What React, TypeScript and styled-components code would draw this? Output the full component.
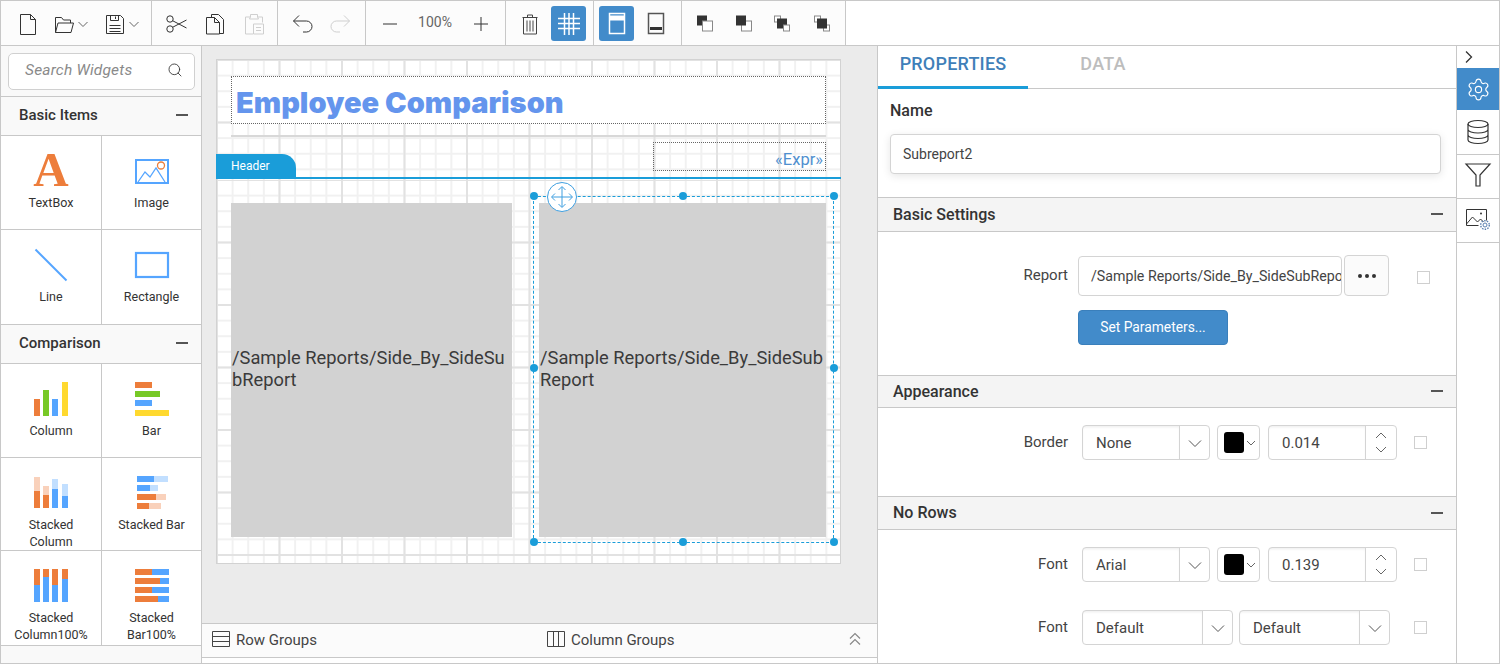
import React from "react";
import styled, { createGlobalStyle } from "styled-components";
import { Settings, Search } from "lucide-react";

const Global = createGlobalStyle`
  html, body { margin: 0; padding: 0; background: #fff; }
  * { box-sizing: border-box; }
  body { font-family: Roboto, "Liberation Sans", sans-serif; color: #333; }
`;

const LINE = "#c8c8c8";

const Root = styled.div`
  width: 1500px; height: 664px; border: 1px solid ${LINE}; overflow: hidden;
  display: flex; flex-direction: column; background: #fff;
`;
const Toolbar = styled.div`
  height: 45px; flex: none; display: flex; border-bottom: 1px solid ${LINE}; background: #fff;
`;
const ToolGroup = styled.div<{ $w: number; $pad: number }>`
  width: ${(p) => p.$w}px; flex: none; display: flex; align-items: center; gap: 4px;
  padding: 1px 0 0 ${(p) => p.$pad}px; border-right: 1px solid ${LINE}; background: #fcfcfc;
`;
const ToolButton = styled.div<{ $active?: boolean; $ml?: number }>`
  width: 35px; height: 35px; flex: none; display: flex; align-items: center; justify-content: center;
  border-radius: 3px; margin-left: ${(p) => p.$ml ?? 0}px;
  background: ${(p) => (p.$active ? "#428bca" : "transparent")};
`;
const SplitButton = styled.div<{ $ml: number }>`
  width: 38px; height: 35px; flex: none; display: flex; align-items: center; margin-left: ${(p) => p.$ml}px;
`;
const ZoomLabel = styled.div`
  width: 48px; text-align: center; font-size: 14px; color: #666; margin-top: -3px;
`;
const Icon = styled.svg.attrs({ viewBox: "0 0 24 24", width: 24, height: 24 })<{ $c?: string }>`
  display: block; flex: none; fill: none; stroke: ${(p) => p.$c ?? "#333"}; stroke-width: 1;
`;
const Caret = styled.svg.attrs({ viewBox: "0 0 14 14", width: 14, height: 14 })`
  display: block; flex: none; fill: none; stroke: #666; stroke-width: 1;
`;

const Main = styled.div`
  flex: 1; min-height: 0; display: flex;
`;

/* Left */
const LeftPanel = styled.div`
  width: 201px; flex: none; border-right: 1px solid ${LINE}; background: #f9f9f9; display: flex; flex-direction: column;
`;
const SearchWrap = styled.div`
  height: 51px; flex: none; padding: 7px 6px 0 7px; border-bottom: 1px solid ${LINE};
`;
const SearchBox = styled.div`
  height: 37px; border: 1px solid #d0d0d0; border-radius: 5px; background: #fff; display: flex; align-items: center;
  justify-content: space-between; padding: 0 11px 3px 16px; font-style: italic; font-size: 15.5px; letter-spacing: 0.2px; color: #8a8a8a;
`;
const ItemsGroup = styled.div`
  border-bottom: 1px solid ${LINE}; flex: none;
`;
const GroupHeader = styled.div`
  height: 39px; display: flex; align-items: center; justify-content: space-between; padding: 0 13px 2px 18px;
  border-bottom: 1px solid ${LINE}; font-size: 15px; font-weight: 500; color: #333;
`;
const Minus = styled.span`
  display: block; width: 12px; height: 2px; background: #555;
`;
const ItemGrid = styled.div`
  display: grid; grid-template-columns: 101px 99px; background: #fff;
`;
const ItemCell = styled.div<{ $h: number; $last?: boolean }>`
  height: ${(p) => p.$h}px; padding-top: 16px; display: flex; flex-direction: column; align-items: center;
  border-bottom: ${(p) => (p.$last ? "none" : `1px solid ${LINE}`)};
  &:nth-child(odd) { border-right: 1px solid ${LINE}; }
`;
const ItemIcon = styled.div`
  height: 38px; margin-bottom: 4px; display: flex; align-items: center; justify-content: center; flex: none;
`;
const ItemLabel = styled.div`
  font-size: 12.5px; line-height: 17px; text-align: center; color: #333; width: 80px;
`;
const ChartSvg = styled.svg.attrs({ viewBox: "0 0 36 36", width: 36, height: 36 })`
  display: block;
`;
const LetterA = styled.svg.attrs({ viewBox: "0 0 36 36", width: 36, height: 36 })`
  display: block; overflow: visible; font-family: "Liberation Serif", serif; font-weight: 700; font-size: 49px; fill: #ed7d3b;
`;

/* Center */
const Center = styled.div`
  width: 676px; flex: none; display: flex; flex-direction: column; border-right: 1px solid ${LINE}; background: #fff;
`;
const Stage = styled.div`
  flex: 1; min-height: 0; background: #ebebeb; padding: 13px 0 0 14px;
`;
const Canvas = styled.div`
  position: relative; width: 625px; height: 505px; border: 1px solid #d2d2d2; background: #fff; display: flex; flex-direction: column;
`;
const GridBand = styled.div<{ $h: number }>`
  height: ${(p) => p.$h}px; flex: none;
  background-color: #fff;
  background-image:
    linear-gradient(to right, #e2e2e2 2px, transparent 2px),
    linear-gradient(to bottom, #e2e2e2 2px, transparent 2px),
    linear-gradient(to right, #f1f1f1 2px, transparent 2px),
    linear-gradient(to bottom, #f1f1f1 2px, transparent 2px);
  background-size: 62.5px 62.5px, 62.5px 62.5px, 15.625px 15.625px, 15.625px 15.625px;
  background-position: -1px 0, 0 -1px, -1px 0, 0 -1px;
`;
const Placed = styled.div<{ $x: number; $y: number; $w: number; $h: number }>`
  position: absolute; left: ${(p) => p.$x - 217}px; top: ${(p) => p.$y - 60}px;
  width: ${(p) => p.$w}px; height: ${(p) => p.$h}px;
`;
const TitleBox = styled(Placed)`
  border: 1px dotted #666; background: #fff; display: flex; align-items: center; padding: 4px 0 0 4px;
  font-family: Inter, "Open Sans", sans-serif; font-weight: 900; font-size: 29px; color: #6495ed; white-space: nowrap;
`;
const HairLine = styled(Placed)`
  background: #d8d8d8;
`;
const ExprBox = styled(Placed)`
  border: 1px dotted #666; display: flex; align-items: flex-end; justify-content: flex-end; padding: 0 2px 0 0;
  font-size: 16.500px; line-height: 20px; color: #4f8fcf;
`;
const BandTab = styled(Placed)`
  background: #1a9dd9; color: #fff; font-size: 12px; border-top-right-radius: 14px;
  display: flex; align-items: center; padding: 0 0 0 15px;
`;
const BandLine = styled(Placed)`
  background: #1a9dd9;
`;
const Subreport = styled(Placed)`
  background: #d2d2d2; display: flex; align-items: center; font-size: 18.300px; line-height: 22px; color: #3a3a3a;
  word-break: break-all; padding: 0 0 2px 1px;
`;
const Selection = styled(Placed)`
  border: 1px dashed #1a9dd9;
`;
const Handle = styled(Placed)`
  background: #1a9dd9; border-radius: 50%;
`;
const MoveHandle = styled(Placed)`
  background: #fff; border: 1px solid #3f9fe0; border-radius: 50%; display: flex; align-items: center; justify-content: center;
`;
const MoveSvg = styled.svg.attrs({ viewBox: "0 0 24 24", width: 24, height: 24 })`
  display: block; fill: none; stroke: #3f9fe0; stroke-width: 1;
`;
const BottomBar = styled.div`
  height: 35px; flex: none; margin-top: 0; border-top: 1px solid ${LINE}; border-bottom: 1px solid ${LINE}; background: #fbfbfb;
  display: flex; align-items: center; font-size: 15px; color: #444; padding: 0 0 2px 10px;
`;
const BarGroup = styled.div<{ $w: number }>`
  width: ${(p) => p.$w}px; flex: none; display: flex; align-items: center; gap: 6px;
`;
const BarIcon = styled.svg.attrs({ viewBox: "0 0 18 18", width: 18, height: 18 })`
  display: block; flex: none; fill: none; stroke: #444; stroke-width: 1; margin-bottom: 2px;
`;
const BarChevrons = styled.svg.attrs({ viewBox: "0 0 12 14", width: 12, height: 14 })`
  display: block; flex: none; fill: none; stroke: #888; stroke-width: 1.2; margin-bottom: 2px;
`;
const BottomStrip = styled.div`
  height: 5px; flex: none; background: #fff;
`;

/* Right */
const RightPanel = styled.div`
  flex: 1; min-width: 0; display: flex; flex-direction: column; background: #fff; border-right: 1px solid ${LINE}; overflow: hidden;
`;
const Tabs = styled.div`
  height: 43px; flex: none; display: flex; border-bottom: 1px solid ${LINE};
`;
const Tab = styled.div<{ $active?: boolean }>`
  width: 150px; height: 43px; flex: none; display: flex; align-items: center; justify-content: center;
  padding-bottom: ${(p) => (p.$active ? 5 : 8)}px;
  font-size: 18px; font-weight: 500; letter-spacing: 0.2px;
  color: ${(p) => (p.$active ? "#3f7fb9" : "#bdbdbd")};
  border-bottom: ${(p) => (p.$active ? "3px solid #1a9dd9" : "none")};
`;
const NameBlock = styled.div`
  height: 108px; flex: none; padding: 13px 15px 0 12px; position: relative;
`;
const NameLabel = styled.div`
  font-size: 16px; font-weight: 500; line-height: 18px; color: #333; margin-bottom: 14px;
`;
const NameInput = styled.div`
  height: 40px; border: 1px solid #d4d4d4; border-radius: 4px; background: #fff; display: flex; align-items: center; padding: 0 12px;
  font-size: 14px; color: #444; box-shadow: 0 2px 8px rgba(0, 0, 0, 0.1);
`;
const SectionHeader = styled.div<{ $h: number }>`
  height: ${(p) => p.$h}px; flex: none; display: flex; align-items: center; justify-content: space-between;
  padding: 0 13px 1px 15px; background: #f4f4f4; border-top: 1px solid ${LINE}; border-bottom: 1px solid ${LINE};
  font-size: 16px; font-weight: 500; color: #333;
`;
const SectionBody = styled.div<{ $h: number; $pt: number }>`
  height: ${(p) => p.$h}px; flex: none; padding-top: ${(p) => p.$pt}px;
`;
const Row = styled.div<{ $mb?: number }>`
  display: flex; align-items: center; margin-bottom: ${(p) => p.$mb ?? 0}px;
`;
const RowLabel = styled.div<{ $gap: number }>`
  width: 190px; flex: none; text-align: right; font-size: 15px; color: #444; margin-right: ${(p) => p.$gap}px; padding-bottom: 2px;
`;
const TextField = styled.div`
  width: 264px; height: 40px; flex: none; border: 1px solid #d4d4d4; border-radius: 4px; display: flex; align-items: center;
  padding-left: 12px; font-size: 14.200px; color: #444; overflow: hidden; white-space: nowrap;
`;
const EllipsisButton = styled.div`
  width: 45px; height: 41px; flex: none; margin-left: 2px; border: 1px solid #d4d4d4; border-radius: 4px; background: #fbfbfb;
  display: flex; align-items: center; justify-content: center; gap: 3px;
`;
const Dot = styled.span`
  width: 4px; height: 4px; border-radius: 50%; background: #333;
`;
const Check = styled.div<{ $ml: number; $mt?: number }>`
  width: 13px; height: 13px; flex: none; border: 1px solid #cfcfcf; margin-left: ${(p) => p.$ml}px; margin-top: ${(p) => p.$mt ?? 0}px;
`;
const PrimaryButton = styled.div`
  width: 150px; height: 35px; margin: 14px 0 0 200px; background: #428bca; border: 1px solid #3a7fbb; border-radius: 4px;
  color: #fff; font-size: 13.800px; display: flex; align-items: center; justify-content: center; padding-bottom: 1px;
`;
const Field = styled.div<{ $w: number; $ml?: number }>`
  width: ${(p) => p.$w}px; height: 35px; flex: none; margin-left: ${(p) => p.$ml ?? 0}px; display: flex;
  border: 1px solid #d4d4d4; border-radius: 4px; background: #fff; font-size: 15px; color: #444; overflow: hidden;
`;
const FieldValue = styled.div`
  flex: 1; min-width: 0; display: flex; align-items: center; padding: 1px 0 0 13px;
  box-shadow: inset 0 2px 3px -1px rgba(0, 0, 0, 0.08);
`;
const FieldArrow = styled.div`
  width: 30px; flex: none; border-left: 1px solid #d4d4d4; display: flex; align-items: center; justify-content: center;
`;
const Chevron = styled.svg.attrs({ viewBox: "0 0 16 16", width: 16, height: 16 })`
  display: block; fill: none; stroke: #555; stroke-width: 1;
`;
const Swatch = styled.span`
  width: 20px; height: 21px; flex: none; background: #000; border-radius: 3px; margin-left: 6px;
`;
const ColorField = styled(Field)`
  align-items: center; gap: 1px;
`;
const Spinner = styled.div`
  width: 31px; flex: none; border-left: 1px solid #d4d4d4; display: flex; flex-direction: column; align-items: center; justify-content: center; gap: 1px;
`;
const TinyChevron = styled.svg.attrs({ viewBox: "0 0 12 12", width: 12, height: 12 })`
  display: block; fill: none; stroke: #666; stroke-width: 1;
`;

/* Side */
const SideRail = styled.div`
  width: 42px; flex: none; display: flex; flex-direction: column; background: #fff;
`;
const RailToggle = styled.div`
  height: 22px; flex: none; display: flex; align-items: center; padding-left: 4px;
`;
const RailItem = styled.div<{ $active?: boolean; $h: number; $pb?: number }>`
  height: ${(p) => p.$h}px; flex: none; display: flex; align-items: center; justify-content: center; padding-bottom: ${(p) => p.$pb ?? 0}px;
  background: ${(p) => (p.$active ? "#428bca" : "#fff")}; border-bottom: ${(p) => (p.$active ? "none" : `1px solid ${LINE}`)};
`;
const RailSvg = styled.svg.attrs({ viewBox: "0 0 28 28", width: 28, height: 28 })`
  display: block; fill: none; stroke: #333; stroke-width: 1.2;
`;

const O = "#ed7d3b", G = "#77c926", B = "#55a5ff", Y = "#ffd92f", LO = "#f9d1bb", LB = "#c2dfff";

type R = [number, number, number, number, string];
const Rects = ({ r }: { r: R[] }) => (
  <ChartSvg>
    {r.map(([x, y, w, h, c], i) => (
      <rect key={i} x={x} y={y} width={w} height={h} fill={c} />
    ))}
  </ChartSvg>
);

const FileIcon = () => (
  <Icon><path d="M4.5 2.5h10l5 5v15h-15zM14.5 2.5v5h5" /></Icon>
);
const OpenIcon = () => (
  <Icon><path d="M3.5 20.5v-15h6l2 2.5h7v3M3.5 20.5h15.5l2.5-9.500H6z" /></Icon>
);
const SaveIcon = () => (
  <Icon><path d="M3.500 3.500h14l3 3v15h-17zM7.500 3.500v5h8v-5M12.500 4.500v2.500M6.500 13.500h11M6.500 16.500h11M6.500 19.500h11" /></Icon>
);
const CaretDown = () => (
  <Caret><path d="M2.500 5l4.500 4.500L11.500 5" /></Caret>
);

export default function App() {
  return (
    <Root>
      <Global />
      <Toolbar>
        <ToolGroup $w={151} $pad={9}>
          <ToolButton><FileIcon /></ToolButton>
          <SplitButton $ml={3}><OpenIcon /><CaretDown /></SplitButton>
          <SplitButton $ml={9}><SaveIcon /><CaretDown /></SplitButton>
        </ToolGroup>
        <ToolGroup $w={126} $pad={6}>
          <ToolButton>
            <Icon><circle cx="6" cy="7" r="3.200" /><circle cx="6" cy="17" r="3.200" /><path d="M8.800 8.800L22.500 16M8.800 15.200L22.500 8" /></Icon>
          </ToolButton>
          <ToolButton>
            <Icon><path d="M8.500 5V2.500h7l5 5v14h-4M3.500 5.500h8l5 5v11.500h-13zM11.500 5.500v5h5" /></Icon>
          </ToolButton>
          <ToolButton>
            <Icon $c="#cfcfcf"><path d="M8 5H3.500v17H11M16 5h4.500v5.500M8.500 5V2.500h7V5l1 2h-9zM11.500 12h10v10h-10zM14 15.500h5M14 18.500h5" /></Icon>
          </ToolButton>
        </ToolGroup>
        <ToolGroup $w={88} $pad={6}>
          <ToolButton>
            <Icon><path d="M3.500 9h13a5.500 5.500 0 0 1 0 11H13M9 3.500L3.500 9 9 14.500" /></Icon>
          </ToolButton>
          <ToolButton>
            <Icon $c="#cfcfcf"><path d="M20.500 9h-13a5.500 5.500 0 0 0 0 11H11M15 3.500L20.500 9 15 14.500" /></Icon>
          </ToolButton>
        </ToolGroup>
        <ToolGroup $w={140} $pad={6}>
          <ToolButton><Icon><path d="M5 12h14" /></Icon></ToolButton>
          <ZoomLabel>100%</ZoomLabel>
          <ToolButton><Icon><path d="M5 12h14M12 5v14" /></Icon></ToolButton>
        </ToolGroup>
        <ToolGroup $w={88} $pad={6}>
          <ToolButton>
            <Icon $c="#444"><path d="M4.500 5.500h15M9.500 5.500V3h5v2.500M5.500 5.500v16.500h13V5.500M9 8.500v11M12 8.500v11M15 8.500v11" /></Icon>
          </ToolButton>
          <ToolButton $active>
            <Icon $c="#fff"><path strokeWidth="1.500" d="M7.500 1v22M12 1v22M16.500 1v22M1 6.500h22M1 11.500h22M1 16.500h22" /></Icon>
          </ToolButton>
        </ToolGroup>
        <ToolGroup $w={88} $pad={5}>
          <ToolButton $active>
            <Icon $c="#fff"><rect x="4.500" y="1.500" width="15" height="20" strokeWidth="1.500" /><rect x="5" y="3.500" width="14" height="5" fill="#fff" stroke="none" /></Icon>
          </ToolButton>
          <ToolButton>
            <Icon $c="#555"><rect x="4.500" y="1.500" width="15" height="20" strokeWidth="1.500" /><rect x="6" y="15" width="12" height="3" fill="#333" stroke="none" /></Icon>
          </ToolButton>
        </ToolGroup>
        <ToolGroup $w={164} $pad={4}>
          <ToolButton>
            <Icon $c="#888"><rect x="5" y="3.500" width="10" height="10" fill="#333" stroke="none" /><rect x="10.500" y="9" width="10" height="10" fill="#fff" /></Icon>
          </ToolButton>
          <ToolButton>
            <Icon $c="#888"><rect x="10.500" y="9" width="10" height="10" fill="#fff" /><rect x="5" y="3.500" width="10" height="10" fill="#333" stroke="none" /></Icon>
          </ToolButton>
          <ToolButton>
            <Icon $c="#888"><rect x="4.500" y="4" width="6" height="6" fill="#fff" /><rect x="7" y="6.500" width="10" height="10" fill="#333" stroke="none" /><rect x="13.500" y="13" width="6" height="6" fill="#fff" /></Icon>
          </ToolButton>
          <ToolButton>
            <Icon $c="#888"><rect x="5.500" y="4" width="6" height="6" fill="#fff" /><rect x="14.500" y="13" width="6" height="6" fill="#fff" /><rect x="8" y="6.500" width="10" height="10" fill="#333" stroke="none" /></Icon>
          </ToolButton>
        </ToolGroup>
      </Toolbar>

      <Main>
        <LeftPanel>
          <SearchWrap>
            <SearchBox>
              Search Widgets
              <Search size={16} strokeWidth={1.300} color="#333" />
            </SearchBox>
          </SearchWrap>
          <ItemsGroup>
            <GroupHeader>Basic Items<Minus /></GroupHeader>
            <ItemGrid>
              <ItemCell $h={94}>
                <ItemIcon><LetterA><text x="18" y="33" textAnchor="middle">A</text></LetterA></ItemIcon>
                <ItemLabel>TextBox</ItemLabel>
              </ItemCell>
              <ItemCell $h={94}>
                <ItemIcon>
                  <ChartSvg>
                    <rect x="2" y="7" width="32" height="23" fill="none" stroke={B} strokeWidth="2" />
                    <path d="M4 29l7-10 5 5 6-9 9 14" fill="none" stroke={B} strokeWidth="1.300" />
                    <circle cx="27" cy="12.500" r="3.500" fill="none" stroke={O} strokeWidth="1.300" />
                  </ChartSvg>
                </ItemIcon>
                <ItemLabel>Image</ItemLabel>
              </ItemCell>
              <ItemCell $h={94} $last>
                <ItemIcon>
                  <ChartSvg><path d="M2.500 2.500L33.500 33.500" stroke={B} strokeWidth="2" /></ChartSvg>
                </ItemIcon>
                <ItemLabel>Line</ItemLabel>
              </ItemCell>
              <ItemCell $h={94} $last>
                <ItemIcon>
                  <ChartSvg><rect x="2" y="6" width="32" height="24" fill="none" stroke={B} strokeWidth="2.200" /></ChartSvg>
                </ItemIcon>
                <ItemLabel>Rectangle</ItemLabel>
              </ItemCell>
            </ItemGrid>
          </ItemsGroup>
          <ItemsGroup>
            <GroupHeader>Comparison<Minus /></GroupHeader>
            <ItemGrid>
              <ItemCell $h={94}>
                <ItemIcon><Rects r={[[1, 18, 6, 17, O], [10, 9, 6, 26, G], [19, 18, 6, 17, B], [29, 1, 6, 34, Y]]} /></ItemIcon>
                <ItemLabel>Column</ItemLabel>
              </ItemCell>
              <ItemCell $h={94}>
                <ItemIcon><Rects r={[[1, 1, 17, 6, O], [1, 10, 25, 6, G], [1, 19, 17, 6, B], [1, 29, 34, 6, Y]]} /></ItemIcon>
                <ItemLabel>Bar</ItemLabel>
              </ItemCell>
              <ItemCell $h={93}>
                <ItemIcon><Rects r={[[1, 2, 6, 14, LO], [1, 16, 6, 17, O], [10, 11, 6, 9, LO], [10, 20, 6, 13, O], [19, 4, 6, 10, LB], [19, 14, 6, 19, B], [29, 9, 6, 12, LB], [29, 21, 6, 12, B]]} /></ItemIcon>
                <ItemLabel>Stacked Column</ItemLabel>
              </ItemCell>
              <ItemCell $h={93}>
                <ItemIcon><Rects r={[[3, 1, 17, 6, B], [20, 1, 14, 6, LB], [3, 10, 13, 6, B], [16, 10, 8, 6, LB], [3, 19, 19, 6, O], [22, 19, 10, 6, LO], [3, 28, 12, 6, O], [15, 28, 12, 6, LO]]} /></ItemIcon>
                <ItemLabel>Stacked Bar</ItemLabel>
              </ItemCell>
              <ItemCell $h={94} $last>
                <ItemIcon><Rects r={[[1, 1, 6, 16, O], [1, 17, 6, 17, B], [10, 1, 6, 8, O], [10, 9, 6, 25, B], [19, 1, 6, 16, O], [19, 17, 6, 17, B], [29, 1, 6, 10, O], [29, 11, 6, 23, B]]} /></ItemIcon>
                <ItemLabel>Stacked Column100%</ItemLabel>
              </ItemCell>
              <ItemCell $h={94} $last>
                <ItemIcon><Rects r={[[1, 1, 17, 6, O], [18, 1, 17, 6, B], [1, 10, 25, 6, O], [26, 10, 9, 6, B], [1, 19, 17, 6, O], [18, 19, 17, 6, B], [1, 28, 23, 6, O], [24, 28, 11, 6, B]]} /></ItemIcon>
                <ItemLabel>Stacked Bar100%</ItemLabel>
              </ItemCell>
            </ItemGrid>
          </ItemsGroup>
        </LeftPanel>

        <Center>
          <Stage>
            <Canvas>
              <GridBand $h={120} />
              <GridBand $h={383} />
              <TitleBox $x={231} $y={76} $w={595} $h={48}>Employee Comparison</TitleBox>
              <HairLine $x={231} $y={135} $w={595} $h={2} />
              <ExprBox $x={653} $y={142} $w={173} $h={29}>«Expr»</ExprBox>
              <BandTab $x={216} $y={154} $w={80} $h={24}>Header</BandTab>
              <BandLine $x={216} $y={177} $w={625} $h={2} />
              <Subreport $x={231} $y={203} $w={281} $h={334}>/Sample Reports/Side_By_SideSubReport</Subreport>
              <Subreport $x={539} $y={203} $w={287} $h={334}>/Sample Reports/Side_By_SideSubReport</Subreport>
              <Selection $x={533} $y={196} $w={301} $h={347} />
              <Handle $x={530} $y={192} $w={8} $h={8} />
              <Handle $x={679} $y={192} $w={8} $h={8} />
              <Handle $x={830} $y={192} $w={8} $h={8} />
              <Handle $x={530} $y={364} $w={8} $h={8} />
              <Handle $x={830} $y={364} $w={8} $h={8} />
              <Handle $x={530} $y={538} $w={8} $h={8} />
              <Handle $x={679} $y={538} $w={8} $h={8} />
              <Handle $x={830} $y={538} $w={8} $h={8} />
              <MoveHandle $x={547} $y={182} $w={30} $h={30}>
                <MoveSvg>
                  <path d="M2 12h20M12 2v20M5 8.500L1.500 12 5 15.500M19 8.500L22.500 12 19 15.500M8.500 5L12 1.500 15.500 5M8.500 19L12 22.500 15.500 19" />
                </MoveSvg>
              </MoveHandle>
            </Canvas>
          </Stage>
          <BottomBar>
            <BarGroup $w={335}>
              <BarIcon><path d="M0.500 1.500h17v15h-17zM0.500 6.500h17M0.500 11.500h17" /></BarIcon>
              Row Groups
            </BarGroup>
            <BarGroup $w={302}>
              <BarIcon><path d="M0.500 1.500h17v15h-17zM6.500 1.500v15M11.500 1.500v15" /></BarIcon>
              Column Groups
            </BarGroup>
            <BarChevrons><path d="M1 6.500L6 1.500l5 5M1 12.500L6 7.500l5 5" /></BarChevrons>
          </BottomBar>
          <BottomStrip />
        </Center>

        <RightPanel>
          <Tabs>
            <Tab $active>PROPERTIES</Tab>
            <Tab>DATA</Tab>
          </Tabs>
          <NameBlock>
            <NameLabel>Name</NameLabel>
            <NameInput>Subreport2</NameInput>
          </NameBlock>
          <SectionHeader $h={35}>Basic Settings<Minus /></SectionHeader>
          <SectionBody $h={143} $pt={23}>
            <Row>
              <RowLabel $gap={10}>Report</RowLabel>
              <TextField>/Sample Reports/Side_By_SideSubReport</TextField>
              <EllipsisButton><Dot /><Dot /><Dot /></EllipsisButton>
              <Check $ml={28} $mt={3} />
            </Row>
            <PrimaryButton>Set Parameters...</PrimaryButton>
          </SectionBody>
          <SectionHeader $h={33}>Appearance<Minus /></SectionHeader>
          <SectionBody $h={88} $pt={17}>
            <Row>
              <RowLabel $gap={14}>Border</RowLabel>
              <Field $w={128}><FieldValue>None</FieldValue><FieldArrow><Chevron><path d="M2 5.500l6 6 6-6" /></Chevron></FieldArrow></Field>
              <ColorField $w={43} $ml={7}><Swatch /><TinyChevron><path d="M2 4l4 4 4-4" /></TinyChevron></ColorField>
              <Field $w={129} $ml={8}><FieldValue>0.014</FieldValue><Spinner><TinyChevron><path d="M1 8l5-5 5 5" /></TinyChevron><TinyChevron><path d="M1 4l5 5 5-5" /></TinyChevron></Spinner></Field>
              <Check $ml={17} />
            </Row>
          </SectionBody>
          <SectionHeader $h={34}>No Rows<Minus /></SectionHeader>
          <SectionBody $h={120} $pt={17}>
            <Row $mb={28}>
              <RowLabel $gap={14}>Font</RowLabel>
              <Field $w={128}><FieldValue>Arial</FieldValue><FieldArrow><Chevron><path d="M2 5.500l6 6 6-6" /></Chevron></FieldArrow></Field>
              <ColorField $w={43} $ml={7}><Swatch /><TinyChevron><path d="M2 4l4 4 4-4" /></TinyChevron></ColorField>
              <Field $w={129} $ml={8}><FieldValue>0.139</FieldValue><Spinner><TinyChevron><path d="M1 8l5-5 5 5" /></TinyChevron><TinyChevron><path d="M1 4l5 5 5-5" /></TinyChevron></Spinner></Field>
              <Check $ml={17} />
            </Row>
            <Row>
              <RowLabel $gap={14}>Font</RowLabel>
              <Field $w={151}><FieldValue>Default</FieldValue><FieldArrow><Chevron><path d="M2 5.500l6 6 6-6" /></Chevron></FieldArrow></Field>
              <Field $w={151} $ml={6}><FieldValue>Default</FieldValue><FieldArrow><Chevron><path d="M2 5.500l6 6 6-6" /></Chevron></FieldArrow></Field>
              <Check $ml={24} />
            </Row>
          </SectionBody>
        </RightPanel>

        <SideRail>
          <RailToggle>
            <Chevron><path d="M5 2.500l5.500 5.500L5 13.500" stroke="#333" strokeWidth="1.300" /></Chevron>
          </RailToggle>
          <RailItem $active $h={42}><Settings size={25} strokeWidth={1.100} color="#fff" /></RailItem>
          <RailItem $h={45}>
            <RailSvg><ellipse cx="14" cy="6" rx="10" ry="3.500" /><path d="M4 6v16c0 2 4.500 3.500 10 3.500s10-1.500 10-3.500V6M4 11.500c0 2 4.500 3.500 10 3.500s10-1.500 10-3.500M4 17c0 2 4.500 3.500 10 3.500s10-1.500 10-3.500" /></RailSvg>
          </RailItem>
          <RailItem $h={44} $pb={3}>
            <RailSvg><path d="M2 3h24l-10 11v11h-4V14z" /></RailSvg>
          </RailItem>
          <RailItem $h={44} $pb={3}>
            <RailSvg>
              <path d="M2.500 4.500h20v11M2.500 4.500v16h12M2.500 19l6-7 5 5 3-3 3 3" strokeWidth="1" />
              <circle cx="17" cy="8.500" r="1" fill="#333" stroke="none" />
              <circle cx="21" cy="20" r="2" stroke="#5a7fb0" strokeWidth="1" />
              <circle cx="21" cy="20" r="4.300" stroke="#5a7fb0" strokeWidth="1.400" strokeDasharray="1.500 1.200" />
            </RailSvg>
          </RailItem>
        </SideRail>
      </Main>
    </Root>
  );
}
